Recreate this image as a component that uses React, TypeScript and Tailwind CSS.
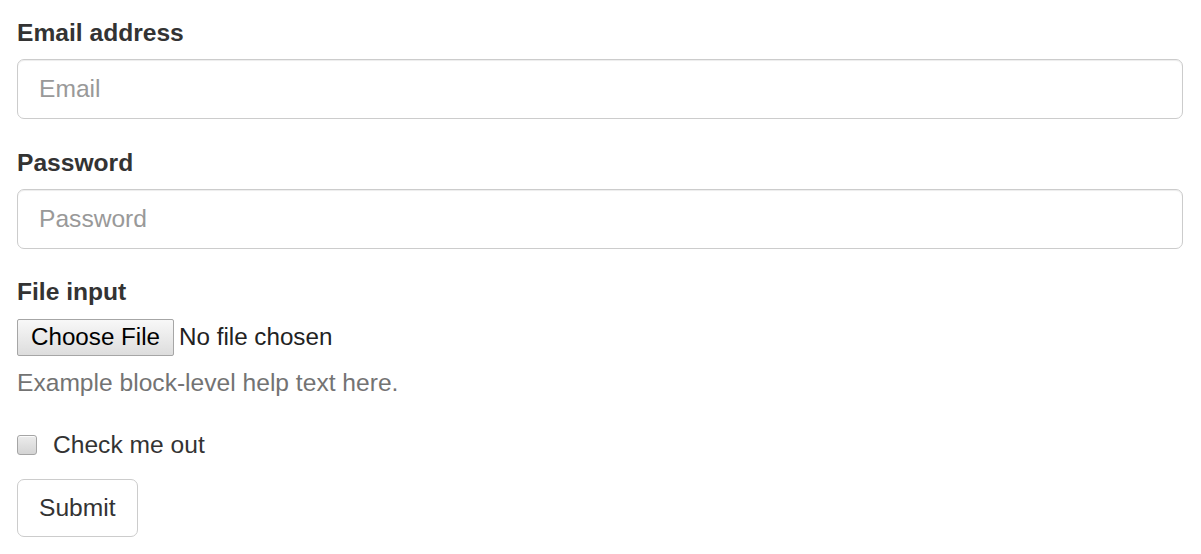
import React from 'react'

const font = { fontFamily: '"Liberation Sans", Arial, sans-serif' }

export default function App() {
  return (
    <div className="min-h-screen bg-white text-[#333] pt-[16px] pl-[17px] pr-[18px]" style={font}>
      <form onSubmit={(e) => e.preventDefault()}>
        <div className="mb-[27px]">
          <label className="block text-[24.6px] leading-[34px] font-bold mb-[9px]">Email address</label>
          <input
            type="email"
            placeholder="Email"
            className="block w-full h-[60px] px-[21px] text-[24.6px] text-[#555] bg-white border border-[#ccc] rounded-[7px] shadow-[inset_0_1px_1px_rgba(0,0,0,0.075)] placeholder:text-[#999] outline-none"
          />
        </div>

        <div className="mb-[26px]">
          <label className="block text-[24.6px] leading-[34px] font-bold mb-[9px]">Password</label>
          <input
            type="password"
            placeholder="Password"
            className="block w-full h-[60px] px-[21px] text-[24.6px] text-[#555] bg-white border border-[#ccc] rounded-[7px] shadow-[inset_0_1px_1px_rgba(0,0,0,0.075)] placeholder:text-[#999] outline-none"
          />
        </div>

        <div className="mb-[28px]">
          <label className="block text-[24.6px] leading-[34px] font-bold mb-[10px]">File input</label>
          <div className="flex items-center h-[37px]">
            <span className="h-[37px] flex items-center px-[13px] text-[24.2px] text-black border border-[#a6a6a6] rounded-[2px] bg-gradient-to-b from-[#f8f8f8] to-[#dddddd]">
              Choose File
            </span>
            <span className="ml-[5px] text-[24.2px] text-[#222]">No file chosen</span>
          </div>
          <p className="mt-[10px] text-[24.6px] leading-[34px] text-[#737373]">Example block-level help text here.</p>
        </div>

        <div className="mb-[17px] flex items-center h-[34px]">
          <span className="w-[20px] h-[20px] rounded-[3px] border border-[#a5a5a5] bg-gradient-to-b from-[#ececec] to-[#d4d4d4] shadow-[inset_0_1px_0_rgba(255,255,255,0.8)]" />
          <span className="ml-[16px] text-[24.6px] leading-[34px]">Check me out</span>
        </div>

        <button
          type="submit"
          className="h-[58px] px-[21px] text-[24.6px] text-[#333] bg-white border border-[#ccc] rounded-[7px]"
        >
          Submit
        </button>
      </form>
    </div>
  )
}
